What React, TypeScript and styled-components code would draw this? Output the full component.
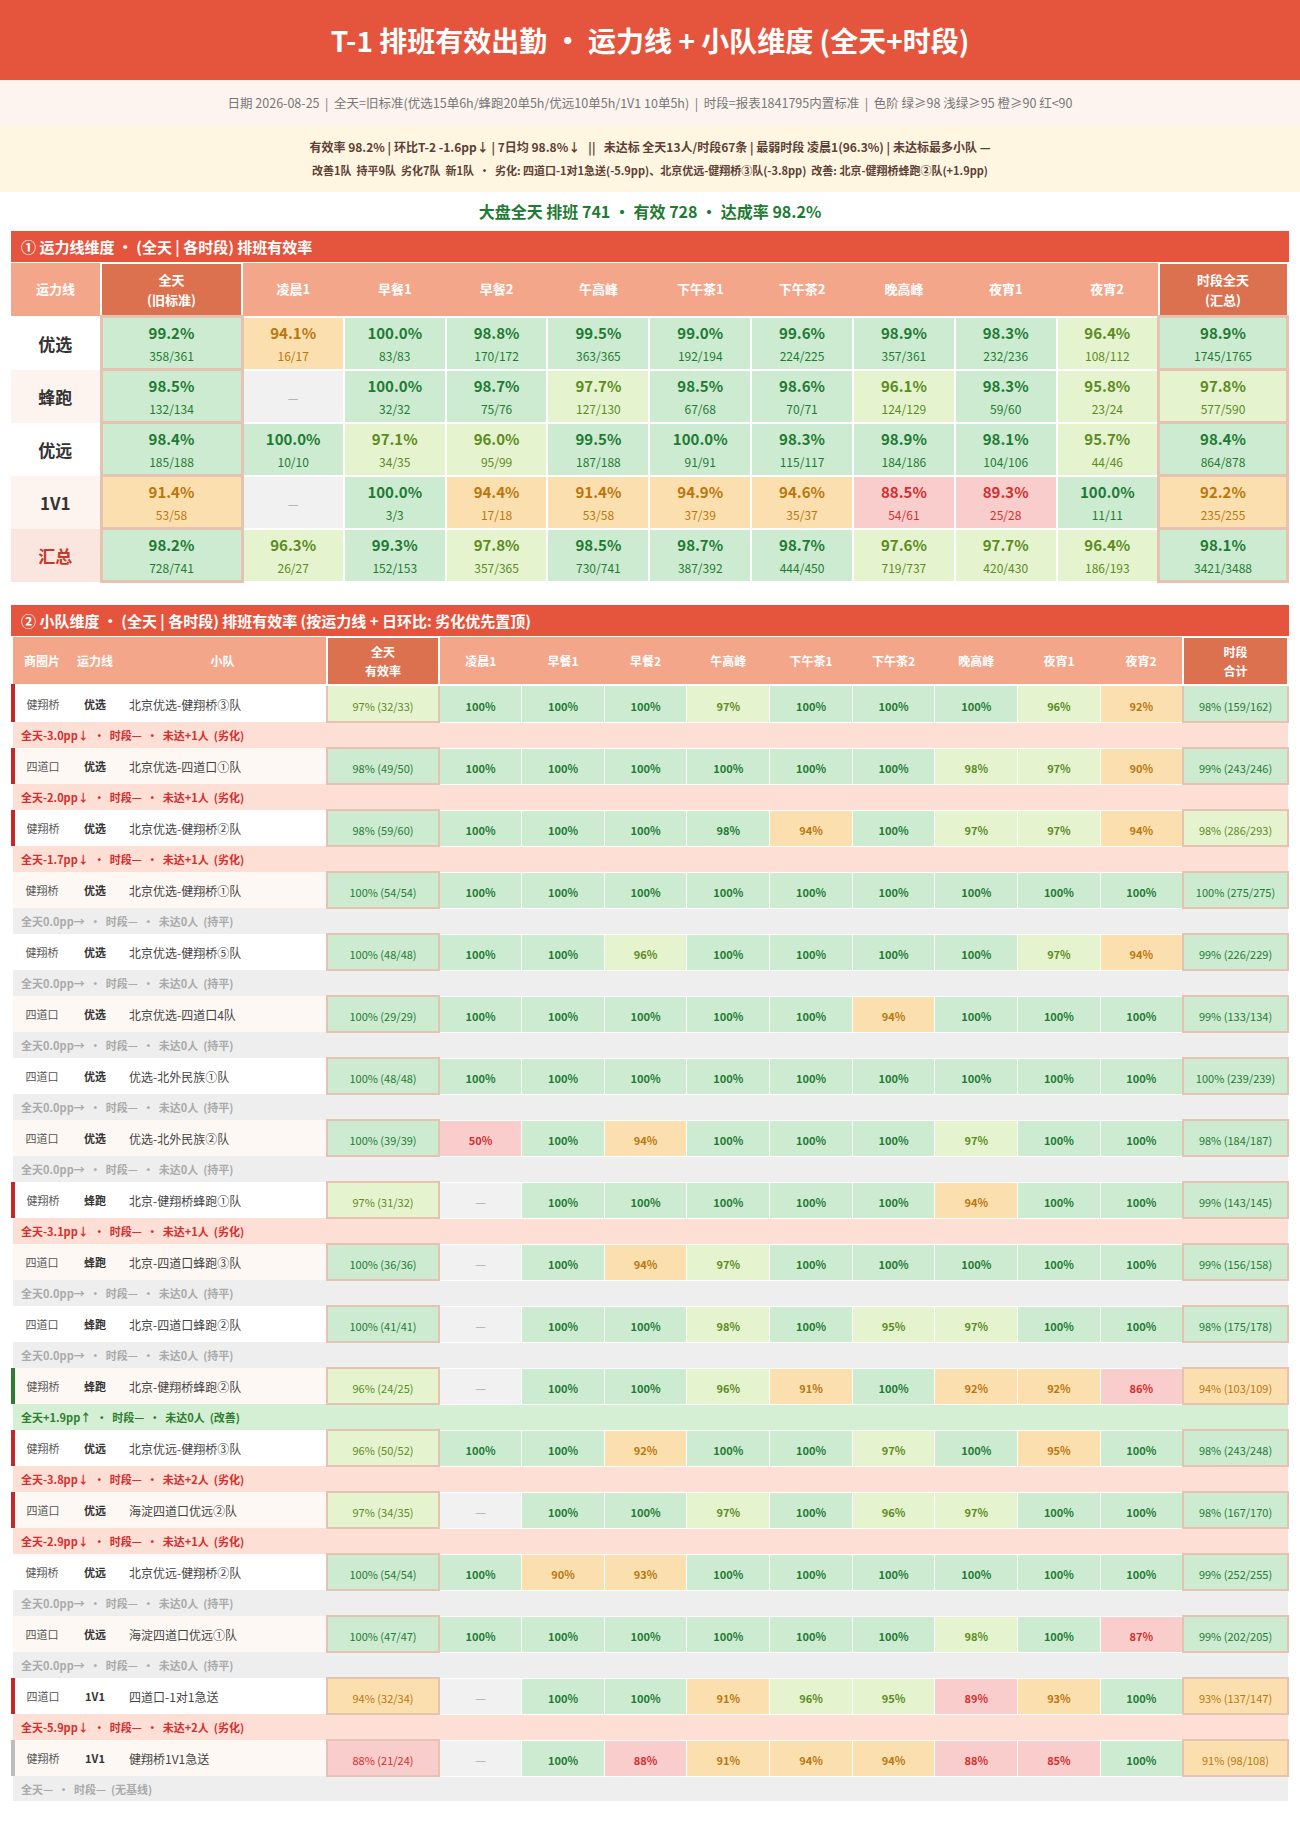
import React from 'react'
import styled, { createGlobalStyle } from 'styled-components'

const GlobalStyle = createGlobalStyle`
  body {
    margin: 0;
    background: #fff;
    font-family: "Microsoft YaHei", "Noto Sans CJK SC", "Noto Sans", sans-serif;
    color: #333;
  }
`

type Level = 'g' | 'lg' | 'o' | 'r' | 'na'

const palette: Record<Level, { bg: string; fg: string }> = {
  g: { bg: '#cdebd0', fg: '#1e7b34' },
  lg: { bg: '#e6f3cf', fg: '#5b8c1e' },
  o: { bg: '#fcdfae', fg: '#b9770e' },
  r: { bg: '#f8cdcb', fg: '#d32f2f' },
  na: { bg: '#f1f1f1', fg: '#aaa' },
}

const levelOf = (v: number | null): Level => {
  if (v === null) return 'na'
  const x = Math.round(v * 10) / 10
  if (x >= 98) return 'g'
  if (x >= 95) return 'lg'
  if (x >= 90) return 'o'
  return 'r'
}

const SLOTS = ['凌晨1', '早餐1', '早餐2', '午高峰', '下午茶1', '下午茶2', '晚高峰', '夜宵1', '夜宵2']

// ---------- top ----------
const TopBar = styled.header`
  height: 80px;
  background: #e5553d;
  color: #fff;
  display: flex;
  align-items: center;
  justify-content: center;
  font-size: 28px;
  font-weight: 700;
  white-space: pre;
`

const MetaBar = styled.div`
  height: 45px;
  background: #fdf3ef;
  color: #777;
  font-size: 12.5px;
  display: flex;
  align-items: center;
  justify-content: center;
  white-space: pre;
`

const Summary = styled.div`
  height: 67px;
  background: #fef6e0;
  color: #5d4037;
  font-weight: 700;
  display: flex;
  flex-direction: column;
  align-items: center;
  justify-content: center;
  gap: 7px;
  white-space: pre;
`

const SummaryLine = styled.div<{ $size: number }>`
  font-size: ${(p) => p.$size}px;
  line-height: 16px;
`

const Headline = styled.div`
  padding: 9px 0 10px;
  text-align: center;
  color: #1e7b34;
  font-size: 16px;
  font-weight: 700;
  line-height: 20px;
`

const Page = styled.main`
  padding: 0 11px 23px;
`

const Section = styled.section<{ $gap?: number }>`
  margin-top: ${(p) => p.$gap || 0}px;
`

const SectionTitle = styled.div`
  height: 31px;
  background: #e5553d;
  color: #fff;
  font-size: 15px;
  font-weight: 700;
  display: flex;
  align-items: center;
  padding-left: 10px;
`

// ---------- tables ----------
const Table = styled.table`
  width: 100%;
  border-collapse: collapse;
  table-layout: fixed;
`

const Head = styled.th<{ $accent?: boolean; $h: number; $size: number }>`
  height: ${(p) => p.$h}px;
  padding: 0;
  background: ${(p) => (p.$accent ? '#db714e' : '#f4a68a')};
  color: #fff;
  font-size: ${(p) => p.$size}px;
  font-weight: 700;
  line-height: ${(p) => p.$size + 7}px;
  border: ${(p) => (p.$accent ? '2px solid #fff' : 'none')};
  border-bottom: 2px solid #fff;
  text-align: center;
`

const LineLabel = styled.th<{ $bg: string; $fg: string }>`
  background: ${(p) => p.$bg};
  color: ${(p) => p.$fg};
  font-size: 17px;
  font-weight: 700;
  padding: 0;
`

const ValueCell = styled.td<{ $level: Level; $hl?: boolean; $h: number; $hlw?: number; $bw?: number }>`
  height: ${(p) => p.$h}px;
  padding: 0;
  text-align: center;
  background: ${(p) => palette[p.$level].bg};
  color: ${(p) => palette[p.$level].fg};
  border: ${(p) => (p.$hl ? `${p.$hlw || 3}px solid #e6c2b3` : `${p.$bw || 2}px solid #fff`)};
`

const Pct = styled.div`
  font-size: 15px;
  font-weight: 700;
  line-height: 20px;
`

const Frac = styled.div`
  font-size: 12px;
  line-height: 16px;
  margin-top: 5px;
`

const Dash = styled.span`
  color: #aaa;
  font-size: 12px;
`

const SmallPct = styled.span<{ $bold?: boolean }>`
  font-size: 11px;
  font-weight: ${(p) => (p.$bold ? 700 : 400)};
`

const InfoCell = styled.td<{ $bg: string; $bar?: string; $align?: string; $size: number; $bold?: boolean; $fg: string }>`
  height: 36px;
  padding: ${(p) => (p.$align === 'left' ? '0 0 0 10px' : '0')};
  background: ${(p) => p.$bg};
  border-left: ${(p) => (p.$bar ? `4px solid ${p.$bar}` : 'none')};
  text-align: ${(p) => p.$align || 'center'};
  font-size: ${(p) => p.$size}px;
  font-weight: ${(p) => (p.$bold ? 700 : 400)};
  color: ${(p) => p.$fg};
  white-space: nowrap;
`

const DeltaCell = styled.td<{ $bg: string; $fg: string }>`
  height: 24px;
  padding: 0 0 0 8px;
  background: ${(p) => p.$bg};
  color: ${(p) => p.$fg};
  font-size: 11px;
  font-weight: 700;
  white-space: pre;
`

// ---------- data ----------
type Cell = [number, number, number] | null

const lineRows: { name: string; bg: string; fg: string; day: Cell; slots: Cell[]; total: Cell }[] = [
  {
    name: '优选', bg: '#fff', fg: '#333',
    day: [99.2, 358, 361],
    slots: [[94.1, 16, 17], [100.0, 83, 83], [98.8, 170, 172], [99.5, 363, 365], [99.0, 192, 194], [99.6, 224, 225], [98.9, 357, 361], [98.3, 232, 236], [96.4, 108, 112]],
    total: [98.9, 1745, 1765],
  },
  {
    name: '蜂跑', bg: '#fdf3ef', fg: '#333',
    day: [98.5, 132, 134],
    slots: [null, [100.0, 32, 32], [98.7, 75, 76], [97.7, 127, 130], [98.5, 67, 68], [98.6, 70, 71], [96.1, 124, 129], [98.3, 59, 60], [95.8, 23, 24]],
    total: [97.8, 577, 590],
  },
  {
    name: '优远', bg: '#fff', fg: '#333',
    day: [98.4, 185, 188],
    slots: [[100.0, 10, 10], [97.1, 34, 35], [96.0, 95, 99], [99.5, 187, 188], [100.0, 91, 91], [98.3, 115, 117], [98.9, 184, 186], [98.1, 104, 106], [95.7, 44, 46]],
    total: [98.4, 864, 878],
  },
  {
    name: '1V1', bg: '#fdf3ef', fg: '#333',
    day: [91.4, 53, 58],
    slots: [null, [100.0, 3, 3], [94.4, 17, 18], [91.4, 53, 58], [94.9, 37, 39], [94.6, 35, 37], [88.5, 54, 61], [89.3, 25, 28], [100.0, 11, 11]],
    total: [92.2, 235, 255],
  },
  {
    name: '汇总', bg: '#fbe5df', fg: '#c9392b',
    day: [98.2, 728, 741],
    slots: [[96.3, 26, 27], [99.3, 152, 153], [97.8, 357, 365], [98.5, 730, 741], [98.7, 387, 392], [98.7, 444, 450], [97.6, 719, 737], [97.7, 420, 430], [96.4, 186, 193]],
    total: [98.1, 3421, 3488],
  },
]

type Trend = 'down' | 'up' | 'flat' | 'none'

const trendStyle: Record<Trend, { bar?: string; bg: string; fg: string }> = {
  down: { bar: '#c62828', bg: '#fddfd5', fg: '#d32f2f' },
  up: { bar: '#2e7d32', bg: '#d5efd5', fg: '#2e7d32' },
  flat: { bg: '#eeeeee', fg: '#aaaaaa' },
  none: { bar: '#bdbdbd', bg: '#eeeeee', fg: '#aaaaaa' },
}

interface Team {
  area: string
  line: string
  name: string
  day: [number, number]
  slots: (number | null)[]
  sum: [number, number]
  trend: Trend
  note: string
}

const dn = (pp: string, miss: string) => `全天-${pp}pp↓  •  时段—  •  未达+${miss}人  (劣化)`
const FLAT = '全天0.0pp→  •  时段—  •  未达0人  (持平)'

const teams: Team[] = [
  { area: '健翔桥', line: '优选', name: '北京优选-健翔桥③队', day: [32, 33], slots: [100, 100, 100, 97, 100, 100, 100, 96, 92], sum: [159, 162], trend: 'down', note: dn('3.0', '1') },
  { area: '四道口', line: '优选', name: '北京优选-四道口①队', day: [49, 50], slots: [100, 100, 100, 100, 100, 100, 97.8, 97, 90], sum: [243, 246], trend: 'down', note: dn('2.0', '1') },
  { area: '健翔桥', line: '优选', name: '北京优选-健翔桥②队', day: [59, 60], slots: [100, 100, 100, 98.2, 94, 100, 97, 97, 94], sum: [286, 293], trend: 'down', note: dn('1.7', '1') },
  { area: '健翔桥', line: '优选', name: '北京优选-健翔桥①队', day: [54, 54], slots: [100, 100, 100, 100, 100, 100, 100, 100, 100], sum: [275, 275], trend: 'flat', note: FLAT },
  { area: '健翔桥', line: '优选', name: '北京优选-健翔桥⑤队', day: [48, 48], slots: [100, 100, 96, 100, 100, 100, 100, 97, 94], sum: [226, 229], trend: 'flat', note: FLAT },
  { area: '四道口', line: '优选', name: '北京优选-四道口4队', day: [29, 29], slots: [100, 100, 100, 100, 100, 94, 100, 100, 100], sum: [133, 134], trend: 'flat', note: FLAT },
  { area: '四道口', line: '优选', name: '优选-北外民族①队', day: [48, 48], slots: [100, 100, 100, 100, 100, 100, 100, 100, 100], sum: [239, 239], trend: 'flat', note: FLAT },
  { area: '四道口', line: '优选', name: '优选-北外民族②队', day: [39, 39], slots: [50, 100, 94, 100, 100, 100, 97, 100, 100], sum: [184, 187], trend: 'flat', note: FLAT },
  { area: '健翔桥', line: '蜂跑', name: '北京-健翔桥蜂跑①队', day: [31, 32], slots: [null, 100, 100, 100, 100, 100, 94, 100, 100], sum: [143, 145], trend: 'down', note: dn('3.1', '1') },
  { area: '四道口', line: '蜂跑', name: '北京-四道口蜂跑③队', day: [36, 36], slots: [null, 100, 94, 97, 100, 100, 100, 100, 100], sum: [156, 158], trend: 'flat', note: FLAT },
  { area: '四道口', line: '蜂跑', name: '北京-四道口蜂跑②队', day: [41, 41], slots: [null, 100, 100, 97.8, 100, 95, 97, 100, 100], sum: [175, 178], trend: 'flat', note: FLAT },
  { area: '健翔桥', line: '蜂跑', name: '北京-健翔桥蜂跑②队', day: [24, 25], slots: [null, 100, 100, 96, 91, 100, 92, 92, 86], sum: [103, 109], trend: 'up', note: '全天+1.9pp↑  •  时段—  •  未达0人  (改善)' },
  { area: '健翔桥', line: '优远', name: '北京优远-健翔桥③队', day: [50, 52], slots: [100, 100, 92, 100, 100, 97, 100, 94.7, 100], sum: [243, 248], trend: 'down', note: dn('3.8', '2') },
  { area: '四道口', line: '优远', name: '海淀四道口优远②队', day: [34, 35], slots: [null, 100, 100, 97, 100, 96, 97, 100, 100], sum: [167, 170], trend: 'down', note: dn('2.9', '1') },
  { area: '健翔桥', line: '优远', name: '北京优远-健翔桥②队', day: [54, 54], slots: [100, 90, 93, 100, 100, 100, 100, 100, 100], sum: [252, 255], trend: 'flat', note: FLAT },
  { area: '四道口', line: '优远', name: '海淀四道口优远①队', day: [47, 47], slots: [100, 100, 100, 100, 100, 100, 97.8, 100, 87], sum: [202, 205], trend: 'flat', note: FLAT },
  { area: '四道口', line: '1V1', name: '四道口-1对1急送', day: [32, 34], slots: [null, 100, 100, 91, 96, 95, 89, 93, 100], sum: [137, 147], trend: 'down', note: dn('5.9', '2') },
  { area: '健翔桥', line: '1V1', name: '健翔桥1V1急送', day: [21, 24], slots: [null, 100, 88, 91, 94, 94, 88, 85, 100], sum: [98, 108], trend: 'none', note: '全天—  •  时段—  (无基线)' },
]

// ---------- parts ----------
const BigCell = ({ cell, hl }: { cell: Cell; hl?: boolean }) => {
  if (!cell) {
    return (
      <ValueCell $level="na" $h={50}>
        <Dash>—</Dash>
      </ValueCell>
    )
  }
  const [v, n, d] = cell
  return (
    <ValueCell $level={levelOf(v)} $hl={hl} $h={50}>
      <Pct>{v.toFixed(1)}%</Pct>
      <Frac>
        {n}/{d}
      </Frac>
    </ValueCell>
  )
}

const RatioCell = ({ n, d }: { n: number; d: number }) => {
  const v = (n / d) * 100
  return (
    <ValueCell $level={levelOf(v)} $hl $hlw={2} $h={32}>
      <SmallPct>
        {Math.round(v)}% ({n}/{d})
      </SmallPct>
    </ValueCell>
  )
}

const LineTable = () => (
  <Table>
    <colgroup>
      <col style={{ width: 90 }} />
      <col style={{ width: 141 }} />
      {SLOTS.map((s) => (
        <col key={s} />
      ))}
      <col style={{ width: 129 }} />
    </colgroup>
    <thead>
      <tr>
        <Head $h={51} $size={13}>运力线</Head>
        <Head $h={51} $size={13} $accent>
          全天
          <br />
          (旧标准)
        </Head>
        {SLOTS.map((s) => (
          <Head key={s} $h={51} $size={13}>
            {s}
          </Head>
        ))}
        <Head $h={51} $size={13} $accent>
          时段全天
          <br />
          (汇总)
        </Head>
      </tr>
    </thead>
    <tbody>
      {lineRows.map((r) => (
        <tr key={r.name}>
          <LineLabel $bg={r.bg} $fg={r.fg}>
            {r.name}
          </LineLabel>
          <BigCell cell={r.day} hl />
          {r.slots.map((c, i) => (
            <BigCell key={i} cell={c} />
          ))}
          <BigCell cell={r.total} hl />
        </tr>
      ))}
    </tbody>
  </Table>
)

const TeamTable = () => (
  <Table>
    <colgroup>
      <col style={{ width: 58 }} />
      <col style={{ width: 48 }} />
      <col style={{ width: 208 }} />
      <col style={{ width: 112 }} />
      {SLOTS.map((s) => (
        <col key={s} />
      ))}
      <col style={{ width: 105 }} />
    </colgroup>
    <thead>
      <tr>
        <Head $h={46} $size={12}>商圈片</Head>
        <Head $h={46} $size={12}>运力线</Head>
        <Head $h={46} $size={12}>小队</Head>
        <Head $h={46} $size={12} $accent>
          全天
          <br />
          有效率
        </Head>
        {SLOTS.map((s) => (
          <Head key={s} $h={46} $size={12}>
            {s}
          </Head>
        ))}
        <Head $h={46} $size={12} $accent>
          时段
          <br />
          合计
        </Head>
      </tr>
    </thead>
    <tbody>
      {teams.map((t, idx) => {
        const bg = idx % 2 === 0 ? '#ffffff' : '#fdf8f4'
        const ts = trendStyle[t.trend]
        return (
          <React.Fragment key={t.name}>
            <tr>
              <InfoCell $bg={bg} $bar={ts.bar} $size={11} $fg="#555">
                {t.area}
              </InfoCell>
              <InfoCell $bg={bg} $size={11} $bold $fg="#333">
                {t.line}
              </InfoCell>
              <InfoCell $bg={bg} $align="left" $size={12} $fg="#444">
                {t.name}
              </InfoCell>
              <RatioCell n={t.day[0]} d={t.day[1]} />
              {t.slots.map((v, i) =>
                v === null ? (
                  <ValueCell key={i} $level="na" $h={34} $bw={1}>
                    <Dash>—</Dash>
                  </ValueCell>
                ) : (
                  <ValueCell key={i} $level={levelOf(v)} $h={34} $bw={1}>
                    <SmallPct $bold>{Math.round(v)}%</SmallPct>
                  </ValueCell>
                )
              )}
              <RatioCell n={t.sum[0]} d={t.sum[1]} />
            </tr>
            <tr>
              <DeltaCell colSpan={14} $bg={ts.bg} $fg={ts.fg}>
                {t.note}
              </DeltaCell>
            </tr>
          </React.Fragment>
        )
      })}
    </tbody>
  </Table>
)

const App = () => (
  <>
    <GlobalStyle />
    <TopBar>T-1 排班有效出勤 • 运力线 + 小队维度 (全天+时段)</TopBar>
    <MetaBar>
      日期 2026-08-25  |  全天=旧标准(优选15单6h/蜂跑20单5h/优远10单5h/1V1 10单5h)  |  时段=报表1841795内置标准  |  色阶 绿≥98 浅绿≥95 橙≥90 红&lt;90
    </MetaBar>
    <Summary>
      <SummaryLine $size={12}>
        有效率 98.2% | 环比T-2 -1.6pp↓ | 7日均 98.8%↓   ||   未达标 全天13人/时段67条 | 最弱时段 凌晨1(96.3%) | 未达标最多小队 —
      </SummaryLine>
      <SummaryLine $size={11}>
        改善1队  持平9队  劣化7队  新1队  •  劣化: 四道口-1对1急送(-5.9pp)、北京优远-健翔桥③队(-3.8pp)  改善: 北京-健翔桥蜂跑②队(+1.9pp)
      </SummaryLine>
    </Summary>
    <Headline>大盘全天 排班 741 • 有效 728 • 达成率 98.2%</Headline>
    <Page>
      <Section>
        <SectionTitle>① 运力线维度 • (全天 | 各时段) 排班有效率</SectionTitle>
        <LineTable />
      </Section>
      <Section $gap={22}>
        <SectionTitle>② 小队维度 • (全天 | 各时段) 排班有效率 (按运力线 + 日环比: 劣化优先置顶)</SectionTitle>
        <TeamTable />
      </Section>
    </Page>
  </>
)

export default App
